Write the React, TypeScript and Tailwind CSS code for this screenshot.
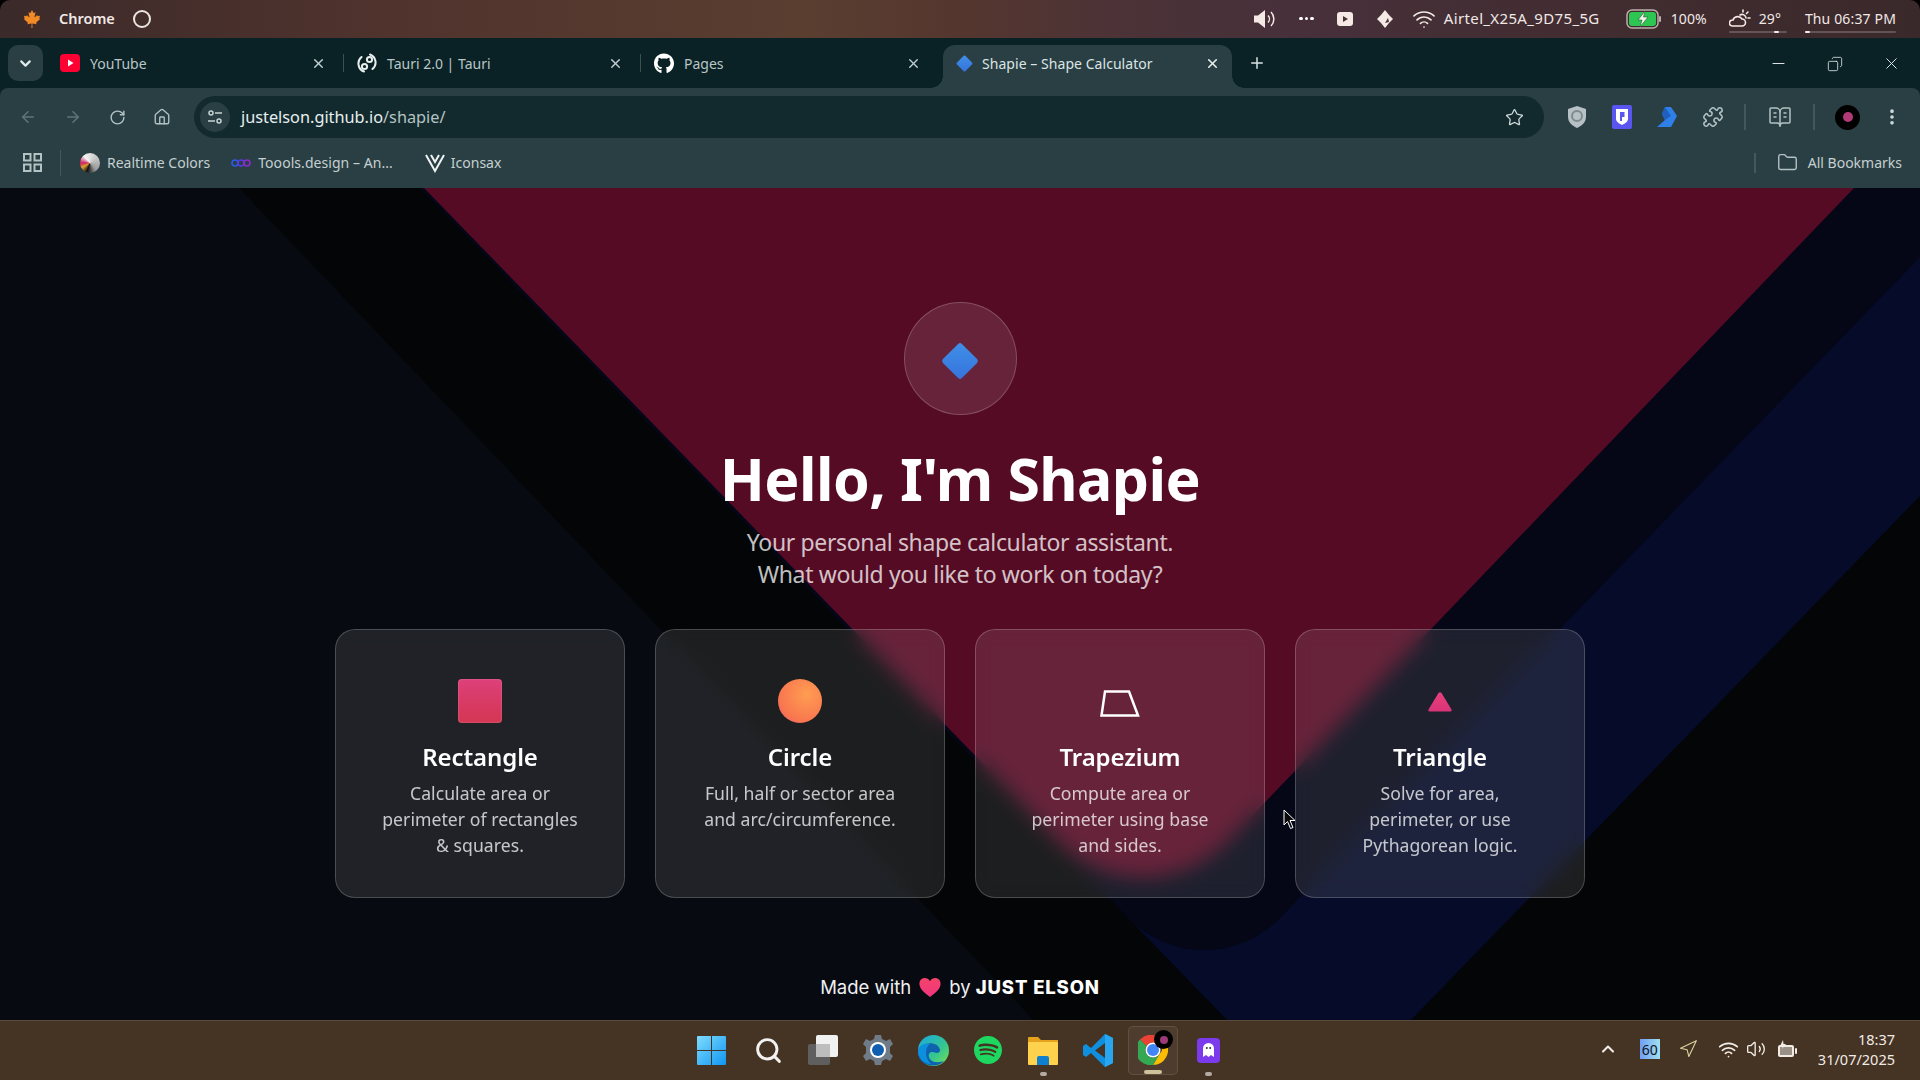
import { ReactNode } from "react";
import {
  ArrowLeft,
  ArrowRight,
  BookOpenText,
  ChevronDown,
  ChevronUp,
  Copy,
  EllipsisVertical,
  Folder,
  Home,
  Minus,
  Navigation,
  Plus,
  Puzzle,
  RotateCw,
  Search,
  Star,
  Volume2,
  Wifi,
  X,
} from "lucide-react";
import { FaCanadianMapleLeaf, FaGithub } from "react-icons/fa";
import { SiSpotify } from "react-icons/si";

const Diamond = ({ size, id }: { size: number; id: string }) => (
  <svg width={size} height={size} viewBox="0 0 40 40">
    <defs>
      <linearGradient id={id} x1="0" y1="0" x2="0" y2="1">
        <stop offset="0" stopColor="#3f8fe6" />
        <stop offset="1" stopColor="#3673dd" />
      </linearGradient>
    </defs>
    <path d="M18 2 a3 3 0 0 1 4 0 L38 18 a3 3 0 0 1 0 4 L22 38 a3 3 0 0 1 -4 0 L2 22 a3 3 0 0 1 0 -4 Z" fill={`url(#${id})`} />
  </svg>
);

const YoutubeIcon = () => (
  <svg width="20" height="18" viewBox="0 0 20 18">
    <rect width="20" height="18" rx="4" fill="#ff0033" />
    <path d="M8 5.5 L13.5 9 L8 12.5 Z" fill="#fff" />
  </svg>
);

const TauriIcon = () => (
  <svg width="20" height="22" viewBox="0 0 20 22" fill="none" stroke="#e8eeee" strokeWidth="2">
    <path d="M13 2.5 A8.5 8.5 0 0 1 15.5 17" strokeLinecap="round" />
    <path d="M7 19.5 A8.5 8.5 0 0 1 4.5 5" strokeLinecap="round" />
    <circle cx="12.5" cy="7.5" r="2.6" />
    <circle cx="7.5" cy="14.5" r="2.6" />
  </svg>
);

const Tab = ({ icon, title, withDivider = true }: { icon: ReactNode; title: string; withDivider?: boolean }) => (
  <div className="relative flex h-[36px] w-[297px] items-center pl-[13px] text-[14px] text-[#b9c6c7]">
    <span className="flex w-[20px] justify-center">{icon}</span>
    <span className="ml-[10px]">{title}</span>
    <X className="ml-auto mr-[17px] text-[#c2cfd0]" size={15} strokeWidth={2.2} />
    {withDivider && <span className="h-[18px] w-px bg-[#3a4f52]" />}
  </div>
);

const StatusUnderline = ({ dot }: { dot: "left" | "right" }) => (
  <span className="absolute -bottom-[4px] left-0 right-0 h-[2px] rounded bg-white/20">
    <span className={`absolute top-0 h-[2px] w-[5px] rounded bg-white/90 ${dot === "left" ? "left-0" : "right-2"}`} />
  </span>
);

const TopBar = () => (
  <div className="flex h-[38px] items-center rounded-t-[10px] bg-[linear-gradient(90deg,#3b2a2a_0%,#50332d_20%,#5a3e30_42%,#55362f_50%,#4a3238_60%,#47303a_68%,#412c30_85%,#3a292b_100%)] pb-[1px] pl-[23px] text-[14px] text-[#f1e9e6]">
    <FaCanadianMapleLeaf className="text-[#f28a26]" size={18} />
    <span className="ml-[18px] text-[14.5px] font-semibold">Chrome</span>
    <span className="ml-[18px] h-[18px] w-[18px] rounded-full border-[2.5px] border-[#eee5e2]" />
    <div className="ml-auto flex items-center">
      <svg width="24" height="22" viewBox="0 0 24 22" fill="none" stroke="#f4e9e4" strokeWidth="1.5">
        <path d="M1 7.5 H5 L12 2 V20 L5 14.5 H1 Z" fill="#f4e9e4" stroke="none" />
        <path d="M15 7.5 a5 5 0 0 1 0 7" />
        <path d="M18 4 a10 10 0 0 1 0 14" />
      </svg>
      <span className="ml-[22px] flex gap-[2px]">
        <i className="h-[3.5px] w-[3.5px] rounded-full bg-white" />
        <i className="h-[3.5px] w-[3.5px] rounded-full bg-white" />
        <i className="h-[3.5px] w-[3.5px] rounded-full bg-white" />
      </span>
      <svg className="ml-[23px]" width="16" height="14" viewBox="0 0 16 14">
        <rect width="16" height="14" rx="3" fill="#f4e9e4" />
        <path d="M6 4 L11 7 L6 10 Z" fill="#4a3236" />
      </svg>
      <svg className="ml-[24px]" width="16" height="18" viewBox="0 0 16 18">
        <path d="M8 0 L12 5 L16 9 L12 13 L8 18 L4 13 L0 9 L4 5 Z" fill="#f4e9e4" />
        <path d="M8 13 L11 8 L12 12 Z" fill="#4a3236" />
      </svg>
      <Wifi className="ml-[19px]" size={24} strokeWidth={1.7} />
      <span className="ml-[8px] w-[157px] text-[15px] tracking-[0.35px] whitespace-nowrap">Airtel_X25A_9D75_5G</span>
      <svg className="ml-[25px]" width="36" height="22" viewBox="0 0 36 22">
        <rect x="1" y="2" width="31" height="18" rx="5" fill="none" stroke="#b9aea9" strokeWidth="1.5" />
        <rect x="3" y="4" width="27" height="14" rx="3" fill="#2dc653" />
        <rect x="33" y="8" width="2" height="6" rx="1" fill="#b9aea9" />
        <path d="M19 3 L12 12 L16 12 L14 19 L22 9 L17.5 9 Z" fill="#f6f1ec" stroke="#1e5c2f" strokeWidth="0.6" />
      </svg>
      <span className="ml-[9px] w-[33px]">100%</span>
      <span className="relative ml-[25px] flex items-center">
        <svg width="22" height="20" viewBox="0 0 22 20" fill="none" stroke="#f4e9e4" strokeWidth="1.6">
          <path d="M3 17 h10 a3.5 3.5 0 0 0 0 -7 a5 5 0 0 0 -9 1 a3 3 0 0 0 -1 6 Z" />
          <path d="M11 6 a4 4 0 0 1 6 3 M14 1 v2 M19 3 l-1.5 1.5 M21 9 h-2" strokeLinecap="round" />
        </svg>
        <span className="ml-[8px] mr-[6px]">29°</span>
        <StatusUnderline dot="right" />
      </span>
      <span className="relative ml-[18px] mr-[24px] tracking-[0.15px]">
        Thu 06:37 PM
        <StatusUnderline dot="left" />
      </span>
    </div>
  </div>
);

const TabStrip = () => (
  <div className="flex h-[50px] items-start pt-[7px]">
    <div className="ml-[8px] mr-[4px] flex h-[36px] w-[35px] items-center justify-center rounded-[10px] bg-[#2a3f43] text-[#e3ecec]">
      <ChevronDown size={17} strokeWidth={3} />
    </div>
    <Tab icon={<YoutubeIcon />} title="YouTube" />
    <Tab icon={<TauriIcon />} title="Tauri 2.0 | Tauri" />
    <Tab icon={<FaGithub className="text-white" size={21} />} title="Pages" withDivider={false} />
    <div className="relative ml-[5px] flex h-[43px] w-[289px] items-center self-start rounded-t-[12px] bg-[#2a3f43] pb-[7px] pl-[13px] text-[14px] text-[#dbe5e5]">
      <Diamond size={17} id="tabDiamond" />
      <span className="ml-[9px] tracking-[0.05px]">Shapie – Shape Calculator</span>
      <X className="ml-auto mr-[12px] text-[#e7eeee]" size={15} strokeWidth={2.6} />
      <span className="absolute -left-[12px] bottom-0 h-[12px] w-[12px] bg-[radial-gradient(circle_at_0_0,#0a2225_11.5px,#2a3f43_12px)]" />
      <span className="absolute -right-[12px] bottom-0 h-[12px] w-[12px] bg-[radial-gradient(circle_at_100%_0,#0a2225_11.5px,#2a3f43_12px)]" />
    </div>
    <Plus className="ml-[16px] mt-[9px] text-[#d9e3e3]" size={18} strokeWidth={2} />
    <div className="ml-auto flex items-center gap-[39px] pr-[19px] pt-[9px] text-[#e6eeee]">
      <Minus size={19} strokeWidth={1.2} />
      <Copy className="-scale-x-100" size={16} strokeWidth={1.2} />
      <X size={19} strokeWidth={1.2} />
    </div>
  </div>
);

const Toolbar = () => (
  <div className="flex h-[50px] items-center rounded-t-[8px] bg-[#2a3f43] pt-[8px] text-[#b3c2c3]">
    <ArrowLeft className="ml-[19px] text-[#5f7577]" size={18} strokeWidth={2} />
    <ArrowRight className="ml-[27px] text-[#5f7577]" size={18} strokeWidth={2} />
    <RotateCw className="ml-[27px]" size={17} strokeWidth={2} />
    <Home className="ml-[27px]" size={18} strokeWidth={1.8} />
    <div className="ml-[23px] flex h-[42px] w-[1350px] items-center rounded-full bg-[#122a2d] pl-[6px] pr-[20px]">
      <div className="flex h-[30px] w-[30px] items-center justify-center rounded-full bg-[#2a3f43]">
        <svg width="16" height="14" viewBox="0 0 16 14" fill="none" stroke="#c6d3d4" strokeWidth="1.5">
          <circle cx="4" cy="3" r="2" />
          <path d="M8 3 h7 M1 11 h7" />
          <circle cx="12" cy="11" r="2" />
        </svg>
      </div>
      <span className="ml-[11px] text-[16.3px] text-[#e8efef]">
        justelson.github.io<span className="text-[#b5c3c4]">/shapie/</span>
      </span>
      <Star className="ml-auto text-[#cfdbdb]" size={19} strokeWidth={1.6} />
    </div>
    <svg className="ml-[24px]" width="18" height="22" viewBox="0 0 18 22">
      <path d="M9 0 L18 3 V11 C18 17 13 20 9 22 C5 20 0 17 0 11 V3 Z" fill="#b7c0c4" />
      <circle cx="9" cy="10" r="5" fill="none" stroke="#7d8a90" strokeWidth="2" />
    </svg>
    <svg className="ml-[26px]" width="20" height="24" viewBox="0 0 20 24">
      <rect width="20" height="24" rx="2" fill="#5a55f0" />
      <path d="M4 4 H16 V14 C16 17 12 19 10 20 C8 19 4 17 4 14 Z" fill="#fff" />
      <path d="M8 7 H12.5 V12 H10 V16 H8 Z" fill="#5a55f0" />
    </svg>
    <svg className="ml-[25px]" width="20" height="20" viewBox="0 0 20 20">
      <path d="M8 0 H14 L20 9 L14 20 H0 L8 13 L5 7 Z" fill="#2f7fe8" />
      <path d="M8 0 L5 7 L8 13 L14 9 Z" fill="#1e5fc0" />
    </svg>
    <Puzzle className="ml-[25px] text-[#b3c2c3]" size={22} strokeWidth={1.7} />
    <span className="ml-[20px] h-[26px] w-[2px] bg-[#42585b]" />
    <BookOpenText className="ml-[22px] text-[#b3c2c3]" size={24} strokeWidth={1.5} />
    <span className="ml-[21px] h-[26px] w-[2px] bg-[#42585b]" />
    <div className="ml-[20px] flex h-[25px] w-[25px] items-center justify-center rounded-full bg-black">
      <span className="h-[10px] w-[10px] rounded-full bg-[#b23a78]" />
    </div>
    <EllipsisVertical className="ml-[22px] text-[#cfdbdb]" size={20} strokeWidth={2.4} />
  </div>
);

const BookmarksBar = () => (
  <div className="flex h-[50px] items-center bg-[#2a3f43] pb-[1px] text-[14px] text-[#c4d0d1]">
    <svg className="ml-[23px]" width="19" height="19" viewBox="0 0 19 19" fill="none" stroke="#b3c2c3" strokeWidth="2">
      <rect x="1" y="1" width="6.5" height="6.5" />
      <rect x="11.5" y="1" width="6.5" height="6.5" />
      <rect x="1" y="11.5" width="6.5" height="6.5" />
      <rect x="11.5" y="11.5" width="6.5" height="6.5" />
    </svg>
    <span className="ml-[18px] h-[26px] w-[1px] bg-[#42585b]" />
    <span className="ml-[19px] h-[20px] w-[20px] rounded-full bg-[conic-gradient(from_200deg,#111_0deg,#e0a030_40deg,#d02060_70deg,#f4f4f4_120deg,#9a9a9a_300deg,#111_360deg)]" />
    <span className="ml-[7px]">Realtime Colors</span>
    <svg className="ml-[21px]" width="20" height="10" viewBox="0 0 20 10" fill="none" strokeWidth="1.6">
      <circle cx="4" cy="5" r="3" stroke="#2b5be8" />
      <circle cx="10" cy="5" r="3" stroke="#5a3ae0" />
      <circle cx="16" cy="5" r="3" stroke="#8a2ad0" />
    </svg>
    <span className="ml-[7px] tracking-[0.05px]">Toools.design – An...</span>
    <svg className="ml-[32px]" width="20" height="20" viewBox="0 0 20 20" fill="none" stroke="#eef3f3" strokeWidth="2">
      <path d="M1 2 L10 18 L19 2" />
      <path d="M6 2 L10 9 L14 2" />
    </svg>
    <span className="ml-[6px]">Iconsax</span>
    <span className="ml-auto h-[20px] w-[2px] bg-[#42585b]" />
    <Folder className="ml-[21px] text-[#b3c2c3]" size={21} strokeWidth={1.6} />
    <span className="ml-[10px] mr-[18px]">All Bookmarks</span>
  </div>
);

// the wallpaper of the page: flat rotated shapes
const Backdrop = () => (
  <svg className="absolute inset-0 h-full w-full" viewBox="0 188 1920 832" preserveAspectRatio="none">
    <rect x="0" y="188" width="1920" height="832" fill="#070a10" />
    <path d="M239 188 H1920 V1020 H1034 Z" fill="#040506" />
    <path d="M420 188 H1920 V496 L1411 1020 H1227 Z" fill="#050b28" />
    <path d="M420 188 H1920 V257 L1278 920 A106 106 0 0 1 1130 920 Z" fill="#050717" />
    <path d="M424 188 H1854 L1225 844 A118 118 0 0 1 1061 844 Z" fill="#560b24" />
  </svg>
);

const RectShape = () => (
  <div className="h-[44px] w-[44px] rounded-[4px] bg-[linear-gradient(180deg,#dc4079,#d43652)] shadow-[inset_0_0_2px_rgba(255,255,255,0.35)]" />
);

const CircleShape = () => (
  <div className="h-[44px] w-[44px] rounded-full bg-[radial-gradient(circle_at_65%_35%,#ff9d52_0%,#f9784f_65%,#ee5a6c_100%)]" />
);

const TrapeziumShape = () => (
  <svg className="mt-[4px]" width="40" height="27" viewBox="0 0 40 27" fill="none" stroke="#fff" strokeWidth="2.5">
    <path d="M5 1.5 H29 L38 25.5 H1.5 Z" />
  </svg>
);

const TriangleShape = () => (
  <svg className="mt-[2px]" width="24" height="20" viewBox="0 0 24 20">
    <defs>
      <linearGradient id="triFill" x1="0" y1="0" x2="0" y2="1">
        <stop offset="0" stopColor="#e8407c" />
        <stop offset="1" stopColor="#d93478" />
      </linearGradient>
    </defs>
    <path d="M10.5 1 Q12 -0.5 13.5 1 L23.5 17.5 Q24.3 19.5 22 19.5 H2 Q-0.3 19.5 0.5 17.5 Z" fill="url(#triFill)" />
  </svg>
);

const shapes = [
  { title: "Rectangle", icon: <RectShape />, lines: ["Calculate area or", "perimeter of rectangles", "& squares."] },
  { title: "Circle", icon: <CircleShape />, lines: ["Full, half or sector area", "and arc/circumference."] },
  { title: "Trapezium", icon: <TrapeziumShape />, lines: ["Compute area or", "perimeter using base", "and sides."] },
  { title: "Triangle", icon: <TriangleShape />, lines: ["Solve for area,", "perimeter, or use", "Pythagorean logic."] },
];

const ShapeCard = ({ title, icon, lines }: (typeof shapes)[number]) => (
  <div className="flex h-[269px] flex-col items-center rounded-[20px] border border-white/20 bg-white/10 pt-[49px] text-center backdrop-blur-[10px]">
    <div className="flex h-[44px] items-center justify-center">{icon}</div>
    <h3 className="mt-[16px] text-[24px] leading-[36px] font-semibold tracking-[-0.1px] text-white">{title}</h3>
    <p className="mt-[5px] text-[17.6px] leading-[26px] tracking-[0.05px] text-white/75">
      {lines.map((line) => (
        <span key={line} className="block">
          {line}
        </span>
      ))}
    </p>
  </div>
);

const Page = () => (
  <main className="relative flex flex-1 flex-col items-center overflow-hidden bg-[#070a10] pt-[114px] font-['Noto_Sans',sans-serif]">
    <Backdrop />
    <div className="relative flex h-[113px] w-[113px] items-center justify-center rounded-full border border-white/20 bg-white/10">
      <span className="mt-[4px]">
        <Diamond size={38} id="heroDiamond" />
      </span>
    </div>
    <h1 className="relative mt-[24px] text-[59px] leading-[78px] font-bold tracking-[-0.6px] text-white">Hello, I'm Shapie</h1>
    <p className="relative mt-[9px] text-center text-[23px] leading-[32px] tracking-[-0.35px] text-white/75">
      Your personal shape calculator assistant.
      <br />
      What would you like to work on today?
    </p>
    <div className="relative mt-[39px] grid w-[1250px] grid-cols-4 gap-[30px]">
      {shapes.map((shape) => (
        <ShapeCard key={shape.title} {...shape} />
      ))}
    </div>
    <div className="relative mt-[77px] flex items-center font-['Inter',sans-serif] text-[18.5px] leading-[24px] text-[#eef0f2]">
      Made with
      <svg className="mx-[8px]" width="22" height="19" viewBox="0 0 20 18">
        <defs>
          <linearGradient id="heartFill" x1="0" y1="0" x2="0" y2="1">
            <stop offset="0" stopColor="#f4436a" />
            <stop offset="1" stopColor="#f0357f" />
          </linearGradient>
        </defs>
        <path d="M10 18 C3 13 0 9.5 0 5.5 C0 2 2.5 0 5 0 C7 0 9 1 10 3 C11 1 13 0 15 0 C17.5 0 20 2 20 5.5 C20 9.5 17 13 10 18 Z" fill="url(#heartFill)" />
      </svg>
      by&nbsp;<b className="font-extrabold tracking-[0.85px] text-white">JUST ELSON</b>
    </div>
    <svg className="absolute left-[1283px] top-[621px]" width="13" height="21" viewBox="0 0 13 21">
      <path d="M1 1 V16 L4.5 12.5 L7.5 19.5 L10 18.5 L7 11.5 H12 Z" fill="#0a0a0a" stroke="#fff" strokeWidth="1" />
    </svg>
  </main>
);

const TaskIcon = ({ children, dot, active }: { children: ReactNode; dot?: "sm" | "lg"; active?: boolean }) => (
  <div className={`relative flex h-[49px] w-[50px] items-center justify-center rounded-[5px] pb-[1px] ${active ? "border border-white/10 bg-white/5" : ""}`}>
    {children}
    {dot === "sm" && <span className="absolute -bottom-[1px] h-[4px] w-[7px] rounded-full bg-[#b3aaa0]" />}
    {dot === "lg" && <span className="absolute bottom-0 h-[4px] w-[18px] rounded-full bg-[#cdc29a]" />}
  </div>
);

const Taskbar = () => (
  <footer className="relative flex h-[60px] items-center justify-center border-t border-[#5b4a3b] bg-[#453323] font-['Noto_Sans',sans-serif]">
    <div className="ml-[1px] flex items-center gap-[5px]">
      <TaskIcon>
        <svg className="mr-[4px]" width="29" height="29" viewBox="0 0 29 29">
          <defs>
            <linearGradient id="winFill" x1="0" y1="0" x2="1" y2="1">
              <stop offset="0" stopColor="#7fdcff" />
              <stop offset="1" stopColor="#0f96f0" />
            </linearGradient>
          </defs>
          <path d="M0 1 a1 1 0 0 1 1 -1 H14 V14 H0 Z M15 0 H28 a1 1 0 0 1 1 1 V14 H15 Z M0 15 H14 V29 H1 a1 1 0 0 1 -1 -1 Z M15 15 H29 V28 a1 1 0 0 1 -1 1 H15 Z" fill="url(#winFill)" />
        </svg>
      </TaskIcon>
      <TaskIcon>
        <Search className="text-[#f2f2f2]" size={29} strokeWidth={2.4} />
      </TaskIcon>
      <TaskIcon>
        <svg width="30" height="30" viewBox="0 0 30 30">
          <rect x="0" y="9" width="22" height="21" rx="2" fill="#5f5f5f" />
          <rect x="8" y="0" width="22" height="22" rx="2" fill="#f1f1f1" />
          <rect x="8" y="9" width="14" height="13" fill="#bdbdbd" />
        </svg>
      </TaskIcon>
      <TaskIcon>
        <svg width="30" height="30" viewBox="0 0 30 30">
          <path d="M12 0 H18 L19 4 L23 6 L27 4 L30 9 L27 12 V18 L30 21 L27 26 L23 24 L19 26 L18 30 H12 L11 26 L7 24 L3 26 L0 21 L3 18 V12 L0 9 L3 4 L7 6 L11 4 Z" fill="#6f7c88" />
          <circle cx="15" cy="15" r="8" fill="#fff" />
          <circle cx="15" cy="15" r="6" fill="#0f5eb0" />
        </svg>
      </TaskIcon>
      <TaskIcon>
        <svg width="31" height="33" viewBox="0 0 31 33">
          <defs>
            <linearGradient id="edgeTop" x1="0" y1="0" x2="1" y2="1">
              <stop offset="0" stopColor="#1aa7e0" />
              <stop offset="0.6" stopColor="#35c78f" />
              <stop offset="1" stopColor="#7ee04f" />
            </linearGradient>
          </defs>
          <circle cx="15.5" cy="16.5" r="15.5" fill="url(#edgeTop)" />
          <path d="M0 17 C2 8 20 6 22 16 C22 20 17 19 15 18 C10 17 9 24 14 27 C18 29 23 28 26 27 C20 34 6 33 1 24 Z" fill="#0f62ae" />
          <path d="M0 17 C1 12 6 9 12 10 C7 13 6 24 13 30 C6 30 0 24 0 17 Z" fill="#0c8fdc" />
        </svg>
      </TaskIcon>
      <TaskIcon>
        <SiSpotify className="text-[#1ed760]" size={28} />
      </TaskIcon>
      <TaskIcon dot="sm">
        <svg width="30" height="30" viewBox="0 0 30 30">
          <path d="M0 3 a1 1 0 0 1 1 -1 H10 L13 5 H30 V12 H0 Z" fill="#e5a21c" />
          <rect x="0" y="7" width="30" height="23" rx="1" fill="#ffd24d" />
          <path d="M9 23 a2 2 0 0 1 2 -2 H19 a2 2 0 0 1 2 2 V30 H9 Z" fill="#0f7fd0" />
        </svg>
      </TaskIcon>
      <TaskIcon>
        <svg width="30" height="33" viewBox="0 0 30 33">
          <path d="M22 0 L30 4 V29 L22 33 L8 19 L3 23 L0 21 V12 L3 10 L8 14 Z" fill="#0f8fe0" />
          <path d="M22 9 V24 L12 16.5 Z" fill="#453323" />
          <path d="M22 0 L30 4 V29 L22 33 Z" fill="#28a7f0" />
        </svg>
      </TaskIcon>
      <TaskIcon dot="lg" active>
        <svg width="30" height="30" viewBox="0 0 30 30">
          <path d="M15 0 A15 15 0 0 1 28 7.5 H15 A7.5 7.5 0 0 0 8.5 11 L2 4.5 A15 15 0 0 1 15 0 Z" fill="#ea4335" />
          <path d="M28 7.5 A15 15 0 0 1 15 30 L21.5 19 A7.5 7.5 0 0 0 22 7.5 Z" fill="#fbbc04" />
          <path d="M2 4.5 A15 15 0 0 0 15 30 L21.5 19 A7.5 7.5 0 0 1 8.5 11 Z" fill="#34a853" />
          <circle cx="15" cy="15" r="7.5" fill="#fff" />
          <circle cx="15" cy="15" r="6" fill="#4285f4" />
        </svg>
        <span className="absolute right-[4px] top-[3px] flex h-[19px] w-[19px] items-center justify-center rounded-full bg-black">
          <i className="h-[8px] w-[8px] rounded-full bg-[#9c3a78]" />
        </span>
      </TaskIcon>
      <TaskIcon dot="sm">
        <div className="flex h-[25px] w-[23px] items-center justify-center rounded-[4px] bg-[#7c3aed]">
          <svg width="11" height="14" viewBox="0 0 11 14">
            <path d="M0 5.5 a5.5 5.5 0 0 1 11 0 V14 L8 12 L5.5 14 L3 12 L0 14 Z" fill="#fff" />
            <circle cx="3.8" cy="5" r="1" fill="#333" />
            <circle cx="7.2" cy="5" r="1" fill="#333" />
          </svg>
        </div>
      </TaskIcon>
    </div>
    <div className="absolute right-[25px] top-0 flex h-full items-center pb-[3px] text-[#f1ece6]">
      <ChevronUp className="mr-[2px]" size={20} strokeWidth={2.5} />
      <span className="ml-[20px] flex h-[20px] w-[20px] items-center justify-center bg-[linear-gradient(90deg,#6f9ff5,#9fe0f0)] text-[14px] text-[#10131a]">60</span>
      <Navigation className="ml-[18px] text-[#dcd5a0]" size={20} strokeWidth={1.3} />
      <Wifi className="ml-[20px]" size={21} strokeWidth={2} />
      <Volume2 className="ml-[7px]" size={20} strokeWidth={1.6} />
      <svg className="ml-[11px]" width="20" height="18" viewBox="0 0 20 18">
        <rect x="1" y="5" width="16" height="12" rx="2" fill="#f1ece6" />
        <rect x="18" y="8" width="2" height="6" rx="1" fill="#f1ece6" />
        <rect x="3" y="7" width="12" height="8" fill="#453323" opacity="0.5" />
        <path d="M6 0 L3 6 H6 L5 9 L9 4 H6.5 Z" fill="#f1ece6" />
      </svg>
      <div className="ml-[21px] flex flex-col items-end text-[14.5px] leading-[20px]">
        <span>18:37</span>
        <span>31/07/2025</span>
      </div>
    </div>
  </footer>
);

const App = () => {
  return (
    <div className="flex h-screen w-full flex-col overflow-hidden bg-black font-['Noto_Sans',sans-serif]">
      <TopBar />
      <div className="bg-[#0a2225]">
        <TabStrip />
        <Toolbar />
      </div>
      <BookmarksBar />
      <Page />
      <Taskbar />
    </div>
  );
};

export default App;
